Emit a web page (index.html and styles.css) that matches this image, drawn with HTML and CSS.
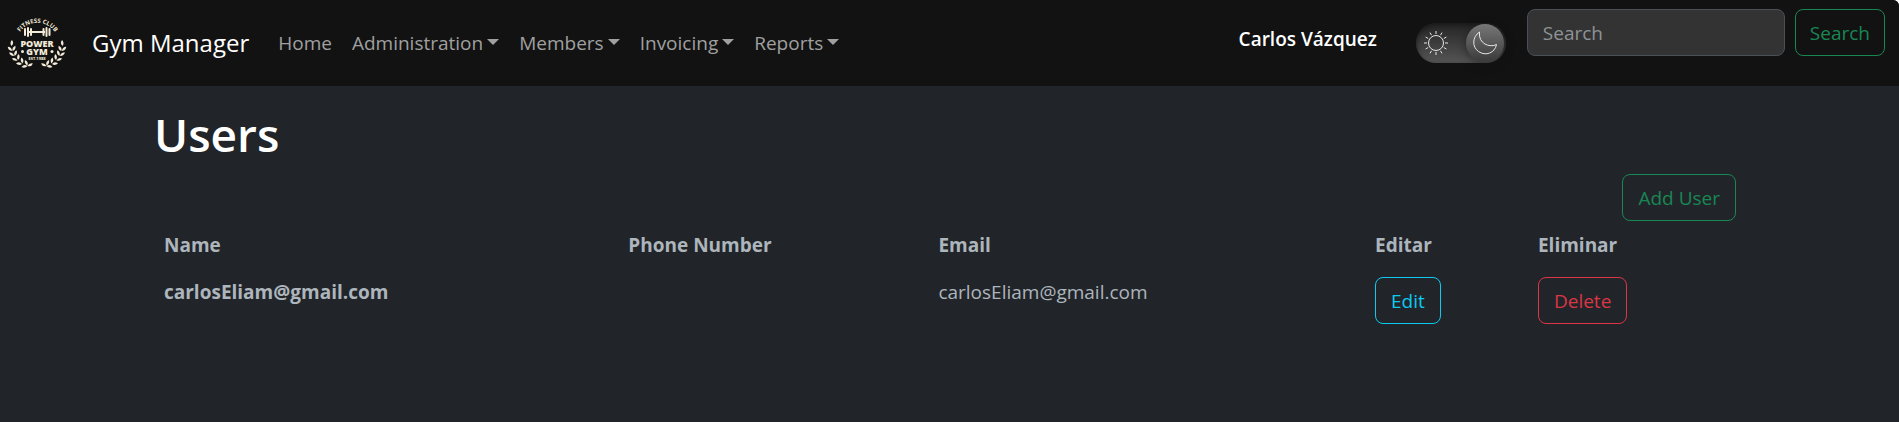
FILE: index.html
```html
<!DOCTYPE html>
<html lang="en">
<head>
<meta charset="utf-8">
<meta name="viewport" content="width=device-width, initial-scale=1">
<title>Users - Gym Manager</title>
<link rel="stylesheet" href="styles.css">
</head>
<body>
<div class="page">
  <header class="navbar">
    <svg class="logo" viewBox="0 0 60 60" role="img" aria-label="Power Gym logo">
      <defs>
        <path id="arc" d="M11 23 A21 21 0 0 1 50 23"/>
        <path id="leaf" d="M0 0 Q-2.400 -3 0 -6 Q2.800 -3 0 0 Z"/>
        <g id="branch">
          <use href="#leaf" transform="translate(4.500 33) rotate(4)"/>
          <use href="#leaf" transform="translate(5 38) rotate(-45)"/>
          <use href="#leaf" transform="translate(5.500 38) rotate(28)"/>
          <use href="#leaf" transform="translate(7 43) rotate(-55)"/>
          <use href="#leaf" transform="translate(7.500 43) rotate(20)"/>
          <use href="#leaf" transform="translate(10.500 47.500) rotate(-70)"/>
          <use href="#leaf" transform="translate(11 47) rotate(5)"/>
          <use href="#leaf" transform="translate(15 51) rotate(-85)"/>
          <use href="#leaf" transform="translate(15.500 50.500) rotate(-10)"/>
          <use href="#leaf" transform="translate(20.500 53) rotate(-100)"/>
          <use href="#leaf" transform="translate(20.500 52.500) rotate(-25)"/>
          <use href="#leaf" transform="translate(20.500 53) rotate(65)"/>
        </g>
      </defs>
      <g fill="#f3ead8">
        <text class="logo-arc" text-anchor="middle"><textPath href="#arc" startOffset="50%">FITNESS CLUB</textPath></text>
        <rect x="22" y="18" width="16" height="2"/>
        <rect x="17" y="15" width="2" height="8" rx="1"/>
        <rect x="20" y="14" width="2" height="10" rx="1"/>
        <rect x="23" y="15" width="2" height="8" rx="1"/>
        <rect x="35.500" y="15" width="2" height="8" rx="1"/>
        <rect x="38.500" y="14" width="2" height="10" rx="1"/>
        <rect x="41.500" y="15" width="2" height="8" rx="1"/>
        <text class="logo-name" x="30" y="34" text-anchor="middle">POWER</text>
        <text class="logo-name" x="30" y="42" text-anchor="middle">GYM</text>
        <circle cx="15.500" cy="38.500" r="1.500"/>
        <circle cx="45" cy="38.500" r="1.500"/>
        <text class="logo-est" x="30" y="47" text-anchor="middle">EST.1988</text>
        <use href="#branch"/>
        <use href="#branch" transform="translate(60 0) scale(-1 1)"/>
      </g>
    </svg>
    <a class="brand" href="#">Gym Manager</a>
    <nav class="links">
      <a href="#">Home</a>
      <a class="drop" href="#">Administration</a>
      <a class="drop" href="#">Members</a>
      <a class="drop" href="#">Invoicing</a>
      <a class="drop" href="#">Reports</a>
    </nav>
    <div class="tools">
      <span class="user">Carlos Vázquez</span>
      <label class="theme">
        <input type="checkbox" checked aria-label="Dark theme">
        <svg class="sun" viewBox="0 0 24 24" aria-hidden="true">
          <circle cx="12" cy="12" r="7.500"/>
          <path d="M12 0v3M12 21v3M0 12h3M21 12h3M6 1.600l1.500 2.600M16.500 19.800l1.500 2.600M1.600 6l2.600 1.500M19.800 16.500l2.600 1.500M1.600 18l2.600-1.500M19.800 7.500l2.600-1.500M6 22.400l1.500-2.600M16.500 4.200l1.500-2.600"/>
        </svg>
        <span class="knob">
          <svg class="moon" viewBox="0 0 24 24" aria-hidden="true">
            <path d="M6.500 1C-1 6 -1 16 5.500 20.500C12.500 25.500 22 22 23.500 13.500C17 17 5 13 6.500 1Z"/>
          </svg>
        </span>
      </label>
      <form class="search">
        <input class="field" type="search" placeholder="Search" aria-label="Search">
        <button class="btn green" type="submit">Search</button>
      </form>
    </div>
  </header>
  <main class="content">
    <h1>Users</h1>
    <div class="actions"><button class="btn green" type="button">Add User</button></div>
    <table class="users">
      <colgroup><col class="c-name"><col class="c-phone"><col class="c-email"><col class="c-edit"><col class="c-delete"></colgroup>
      <thead>
        <tr><th scope="col">Name</th><th scope="col">Phone Number</th><th scope="col">Email</th><th scope="col">Editar</th><th scope="col">Eliminar</th></tr>
      </thead>
      <tbody>
        <tr>
          <th scope="row">carlosEliam@gmail.com</th>
          <td></td>
          <td>carlosEliam@gmail.com</td>
          <td><button class="btn cyan" type="button">Edit</button></td>
          <td><button class="btn red" type="button">Delete</button></td>
        </tr>
      </tbody>
    </table>
  </main>
</div>
</body>
</html>
```
FILE: styles.css
```css
* { box-sizing: border-box; }

html { background: #fff; }

body {
  margin: 0;
  font-family: "Open Sans", "Noto Sans", sans-serif;
  font-size: 19px;
  line-height: 30px;
  color: #adb5bd;
}

.page {
  min-height: 100vh;
  background: #212529;
  border-top-right-radius: 6px;
}

.navbar {
  display: flex;
  align-items: center;
  min-height: 86px;
  padding: 0 14px 0 7px;
  background: #121212;
  border-top-right-radius: 6px;
}

.logo { width: 60px; height: 60px; flex: none; }
.logo-arc { font: 700 6px/6px "Open Sans", sans-serif; }
.logo-name { font: 800 9px/9px "Open Sans", sans-serif; }
.logo-est { font: 700 4px/4px "Open Sans", sans-serif; }

.brand {
  margin: 0 19px 0 25px;
  font-size: 24px;
  color: #fff;
  text-decoration: none;
  white-space: nowrap;
}

.links { display: flex; }
.links a {
  padding: 10px;
  color: #a0a0a0;
  text-decoration: none;
  white-space: nowrap;
}
.drop::after {
  content: "";
  display: inline-block;
  margin-left: 4px;
  vertical-align: 5px;
  border: 6px solid transparent;
  border-top-color: currentColor;
  border-bottom: 0;
}

.tools {
  display: flex;
  align-items: flex-start;
  align-self: flex-start;
  margin-left: auto;
  padding-top: 9px;
}

.user {
  margin: 15px 39px 0 0;
  font-weight: 600;
  color: #fff;
  white-space: nowrap;
}

.theme {
  display: flex;
  align-items: center;
  justify-content: space-between;
  width: 90px;
  height: 40px;
  margin: 14px 21px 0 0;
  padding: 0 2px 0 8px;
  border-radius: 20px;
  background: linear-gradient(#242424, #555);
  box-shadow: inset 0 2px 4px #1a1a1a;
}
.theme input {
  position: absolute;
  opacity: 0;
}
.theme svg {
  width: 24px;
  height: 24px;
  fill: none;
  stroke: #e6e6e6;
}
.knob {
  display: flex;
  align-items: center;
  justify-content: center;
  width: 38px;
  height: 38px;
  border-radius: 50%;
  background: linear-gradient(#777, #3a3a3a);
  box-shadow: 0 2px 10px #1118;
}

.search { display: flex; gap: 10px; }
.field {
  width: 258px;
  height: 47px;
  padding: 0 15px;
  border: 1px solid #495057;
  border-radius: 8px;
  background: #333;
  color: #fff;
  font: inherit;
}
.field::placeholder { color: #8f9396; opacity: 1; }

.btn {
  height: 47px;
  padding: 0 15px;
  border: 1px solid;
  border-radius: 8px;
  background: transparent;
  font: inherit;
  white-space: nowrap;
}
.search .btn { padding: 0 14px; }
.green { color: #198754; }
.cyan { color: #0dcaf0; }
.red { color: #dc3545; }

.content { padding: 18px 163px 40px 154px; }

h1 {
  margin: 0 0 10px;
  font-size: 46px;
  font-weight: 600;
  line-height: 60px;
  color: #fff;
}

.actions { display: flex; justify-content: flex-end; }

.users {
  width: 100%;
  border-collapse: collapse;
  table-layout: fixed;
}
.users th,
.users td {
  padding: 9px 10px 8px;
  text-align: left;
  vertical-align: top;
}
.c-name { width: 29.35%; }
.c-phone { width: 19.6%; }
.c-email { width: 27.6%; }
.c-edit { width: 10.3%; }
.c-delete { width: 13.15%; }
```
